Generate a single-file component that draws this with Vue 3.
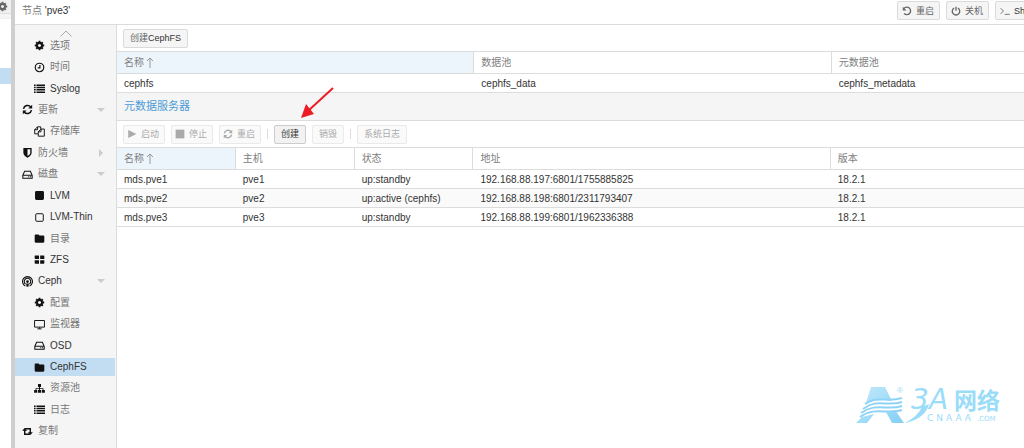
<script setup>
import { h } from 'vue'

const COG = 'M1024 896q0-106-75-181t-181-75-181 75-75 181 75 181 181 75 181-75 75-181zm512-109v222q0 12-8 23t-20 13l-185 28q-19 54-39 91 35 50 107 138 10 12 10 25t-9 23q-27 37-99 108t-94 71q-12 0-26-9l-138-108q-44 23-91 38-16 136-29 186-7 28-36 28h-222q-14 0-24.5-8.5t-11.5-21.5l-28-184q-49-16-90-37l-141 107q-10 9-25 9-14 0-25-11-126-114-165-168-7-10-7-23 0-12 8-23 15-21 51-66.5t54-70.5q-27-50-41-99l-183-27q-13-2-21-12.5t-8-23.5v-222q0-12 8-23t19-13l186-28q14-46 39-92-40-57-107-138-10-12-10-24 0-10 9-23 26-36 98.5-107.5t94.5-71.5q13 0 26 10l138 107q44-23 91-38 16-136 29-186 7-28 36-28h222q14 0 24.5 8.5t11.5 21.5l28 184q49 16 90 37l142-107q9-9 24-9 13 0 25 10 129 119 165 170 7 8 7 22 0 12-8 23-15 21-51 66.5t-54 70.5q26 50 41 98l183 28q13 2 21 12.5t8 23.5z'

// s: stroked outline, f: filled shape, w: stroke width
const icons = {
  cog: { box: '-128 0 1792 1792', f: COG },
  clock: { s: 'M8 1.8a6.2 6.2 0 1 0 0 12.4a6.2 6.2 0 1 0 0-12.4zM8.6 4.5v4h-3.2', w: 1.7 },
  list: { f: 'M0 2h2.4v2.2H0zM3.6 2H16v2.2H3.6zM0 5.4h2.4v2.2H0zM3.6 5.4H16v2.2H3.6zM0 8.8h2.4V11H0zM3.6 8.8H16V11H3.6zM0 12.2h2.4v2.2H0zM3.6 12.2H16v2.2H3.6z' },
  refresh: { s: 'M2.2 7A6 6 0 0 1 12.8 4.4M13.8 9A6 6 0 0 1 3.2 11.6', w: 2.2, f: 'M14.8 1v5.6H9.2zM1.2 15V9.4h5.6z' },
  copy: { s: 'M9.8 4.2V1.2H5.2L1 5.4v6h5M5.2 1.2v4.2H1M10.2 4.4h4.8v10.4H6.2V8.4zM10.2 4.4v4H6.2', w: 1.4 },
  shield: { f: 'M2 1.4h12v7c0 3.2-2.6 5.4-6 7.2c-3.400-1.800-6-4-6-7.200zM8 3.400v9.800c2.400-1.400 4-2.800 4-4.800v-5z' },
  hdd: { s: 'M1.2 9.200L3.800 3.200h8.400l2.600 6v4.200H1.200zM1.200 9.200h13.600', w: 1.5, f: 'M9 10.600h1.500v1.400H9zM11.700 10.600h1.500v1.400h-1.500z' },
  square: { f: 'M3.500 1.500h9a2 2 0 0 1 2 2v9a2 2 0 0 1-2 2h-9a2 2 0 0 1-2-2v-9a2 2 0 0 1 2-2z' },
  squareO: { s: 'M4 2.500h8a1.500 1.500 0 0 1 1.500 1.500v8a1.500 1.500 0 0 1-1.500 1.500H4A1.500 1.500 0 0 1 2.500 12V4A1.500 1.500 0 0 1 4 2.500z', w: 1.4 },
  folder: { f: 'M1 3.500Q1 2 2.500 2h3.700q1.500 0 1.500 1.700h5.800q1.500 0 1.500 1.500v7.300q0 1.500-1.500 1.500h-11Q1 14 1 12.500z' },
  grid: { f: 'M1.500 2h5.300q.5 0 .5.500v4.700H2q-1 0-1-1V2.500zM9 2h5q1 0 1 1v4.200H9zM1 9h6.300v5H2q-1 0-1-1zM9 9h6v4q0 1-1 1H9z' },
  ceph: { s: 'M4.800 14.500A7.200 7.200 0 1 1 11.200 14.500M5.300 11.800A4.700 4.700 0 1 1 10.700 11.800', w: 1.6, f: 'M8 6a2 2 0 1 0 0 4a2 2 0 1 0 0-4zM6 10.800h4l-.700 5H6.700z' },
  monitor: { s: 'M.8 2.200h14.400v9.600H.8zM8 12v2M4.800 14.300h6.400', w: 1.400 },
  sitemap: { f: 'M5.800 1.500h4.400v4.300H8.700v1.700h5V10H15.800v4.300h-4.500V10h1.200V8.700H8.700V10h1.500v4.300H5.800V10h1.500V8.700H3.500V10h1.200v4.300H.2V10h2.100V7.500h5V5.800H5.800z' },
  retweet: { f: 'M3.800 2.800L7.500 7H5v4h5l2 2.200H2.900V7H.2zM12.200 13.200L8.500 9H11V5H6L4 2.800h9.100V9h2.700z' },
  play: { f: 'M2 1.500L15 8L2 14.500z' },
  stop: { f: 'M1 1h14v14H1z' },
  undo: { s: 'M3 4.200A6 6 0 1 1 3.400 12', w: 2.2, f: 'M1.200 1v6h6z' },
  power: { s: 'M5 3.200a6 6 0 1 0 6 0M8 1v6.500', w: 2.1 },
  terminal: { s: 'M1 3.500L5.500 8L1 12.500M7.500 13.300h8', w: 1.400 },
}

const Icon = (props) => {
  const i = icons[props.name]
  return h('svg', { viewBox: i.box || '0 0 16 16', 'aria-hidden': 'true', class: 'icon' }, [
    i.s && h('path', { d: i.s, fill: 'none', stroke: 'currentColor', 'stroke-width': i.w }),
    i.f && h('path', { d: i.f, fill: 'currentColor', 'fill-rule': 'evenodd' }),
  ])
}
Icon.props = ['name']

const nav = [
  { t: '选项', i: 'cog', sub: true },
  { t: '时间', i: 'clock', sub: true },
  { t: 'Syslog', i: 'list', sub: true },
  { t: '更新', i: 'refresh', arrow: 'down' },
  { t: '存储库', i: 'copy', sub: true },
  { t: '防火墙', i: 'shield', arrow: 'right' },
  { t: '磁盘', i: 'hdd', arrow: 'down' },
  { t: 'LVM', i: 'square', sub: true },
  { t: 'LVM-Thin', i: 'squareO', sub: true },
  { t: '目录', i: 'folder', sub: true },
  { t: 'ZFS', i: 'grid', sub: true },
  { t: 'Ceph', i: 'ceph', arrow: 'down' },
  { t: '配置', i: 'cog', sub: true },
  { t: '监视器', i: 'monitor', sub: true },
  { t: 'OSD', i: 'hdd', sub: true },
  { t: 'CephFS', i: 'folder', sub: true, on: true },
  { t: '资源池', i: 'sitemap', sub: true },
  { t: '日志', i: 'list', sub: true },
  { t: '复制', i: 'retweet' },
]
const latin = (t) => /^[\x00-\x7f]+$/.test(t)

const servers = [
  ['mds.pve1', 'pve1', 'up:standby', '192.168.88.197:6801/1755885825', '18.2.1'],
  ['mds.pve2', 'pve2', 'up:active (cephfs)', '192.168.88.198:6801/2311793407', '18.2.1'],
  ['mds.pve3', 'pve3', 'up:standby', '192.168.88.199:6801/1962336388', '18.2.1'],
]
</script>

<template>
  <div class="app">
    <aside class="tree">
      <div class="tree-head"><button class="gear" aria-label="设置"><Icon name="cog" /></button></div>
      <div class="tree-sel"></div>
    </aside>
    <div class="splitter"></div>
    <div class="panel">
      <header class="title">
        <h1><span class="soft">节点</span> 'pve3'</h1>
        <div class="actions">
          <button class="btn"><Icon name="undo" />重启</button>
          <button class="btn"><Icon name="power" />关机</button>
          <button class="btn"><Icon name="terminal" /><span class="dark">Shell</span></button>
        </div>
      </header>
      <div class="body">
        <nav class="side">
          <svg class="up" viewBox="0 0 12 7" aria-hidden="true"><path d="M.5 6.500L6 1l5.500 5.500" fill="none" stroke="#aaa" /></svg>
          <a v-for="n in nav" :key="n.t" href="#" class="item" :class="{ sub: n.sub, on: n.on }">
            <Icon :name="n.i" />
            <span class="label" :class="{ dark: latin(n.t) }">{{ n.t }}</span>
            <i v-if="n.arrow" class="tri" :class="n.arrow"></i>
          </a>
        </nav>
        <main class="main">
          <div class="bar">
            <button class="btn"><span>创建<span class="dark">CephFS</span></span></button>
          </div>
          <table>
            <colgroup><col class="c3" /><col class="c3" /><col /></colgroup>
            <thead>
              <tr><th class="sorted">名称<svg class="sort" viewBox="0 0 8 11" aria-hidden="true"><path d="M4 11V1M1 4l3-3l3 3" /></svg></th><th>数据池</th><th>元数据池</th></tr>
            </thead>
            <tbody>
              <tr><td>cephfs</td><td>cephfs_data</td><td>cephfs_metadata</td></tr>
            </tbody>
          </table>
          <h2>元数据服务器</h2>
          <div class="bar">
            <button class="btn" disabled><Icon name="play" />启动</button>
            <button class="btn" disabled><Icon name="stop" />停止</button>
            <button class="btn" disabled><Icon name="refresh" />重启</button>
            <span class="sep"></span>
            <button class="btn strong">创建</button>
            <button class="btn" disabled>销毁</button>
            <span class="sep"></span>
            <button class="btn" disabled>系统日志</button>
            <svg class="pointer" viewBox="0 0 36 34" aria-hidden="true">
              <path d="M34 2L9 25" stroke="#ed1c24" stroke-width="2" fill="none" /><path d="M2 32L7 18l8 10z" fill="#ed1c24" />
            </svg>
          </div>
          <table>
            <colgroup><col class="c1" /><col class="c1" /><col class="c1" /><col class="c3" /><col /></colgroup>
            <thead>
              <tr><th class="sorted">名称<svg class="sort" viewBox="0 0 8 11" aria-hidden="true"><path d="M4 11V1M1 4l3-3l3 3" /></svg></th><th>主机</th><th>状态</th><th>地址</th><th>版本</th></tr>
            </thead>
            <tbody>
              <tr v-for="s in servers" :key="s[0]"><td v-for="(c, k) in s" :key="k">{{ c }}</td></tr>
            </tbody>
          </table>
        </main>
      </div>
    </div>
    <svg class="mark" viewBox="0 0 146 42">
      <defs>
        <linearGradient id="sky" x1="0" y1="0" x2="1" y2="1"><stop offset="0" stop-color="#c4eafb" /><stop offset="1" stop-color="#83cff5" /></linearGradient>
      </defs>
      <path d="M15 3h14l7 14Q22 14 10 19zM30 28l9-2l9 13H36zM6 33l12-3l-7 9H0z" fill="url(#sky)" />
      <path d="M9 20C22 11 30 19 46 14M7 25C21 14 30 23 46 18M5 29C20 18 31 27 46 22M4 33C19 22 31 31 46 26" fill="none" stroke="#8fd4f6" stroke-width="2" />
      <text x="41" y="9" class="reg">®</text>
      <path d="M73 20Q69 35 49 39Q62 32 66 23z" />
      <text x="55" y="25" class="big">3</text>
      <text x="73" y="25" class="big">A</text>
      <text x="98" y="25" class="cjk">网络</text>
      <text x="71" y="37" class="dom">CNAAA</text>
      <text x="121" y="37" class="com">.COM</text>
    </svg>
  </div>
</template>

<style>
body { margin: 0; }
</style>

<style scoped>
.app {
  position: relative;
  display: flex;
  height: 100vh;
  overflow: hidden;
  background: #fff;
  color: #333;
  font: 10px/14px "Liberation Sans", "Noto Sans CJK SC", sans-serif;
}
.app * { box-sizing: border-box; }
button { font-family: inherit; }
.icon { flex: none; width: 11px; height: 11px; display: block; }
.tree { flex: 0 0 11px; overflow: hidden; }
.tree-head { height: 19px; background: #f5f5f5; border-bottom: 1px solid #eee; }
.gear { display: block; width: 11px; height: 14px; padding: 0; border: 0; border-bottom: 1px solid #ddd; background: #f0f0f0; color: #666; overflow: hidden; }
.gear .icon { margin-left: -3px; }
.tree-sel { height: 16px; margin-top: 49px; background: #c2ddf2; }
.splitter { flex: 0 0 4px; background: #cfcfcf; }
.panel { flex: 1; min-width: 0; display: flex; flex-direction: column; }
.title { display: flex; height: 25px; border-bottom: 1px solid #dcdcdc; padding: 1px 0 0 7px; flex: none; }
h1 { margin: 0; flex: 1; font-size: 10px; line-height: 19px; font-weight: 400; }
.soft { color: #777; }
.dark { color: #333; }
.actions { flex: 0 0 127px; display: flex; gap: 6px; overflow: hidden; }
.btn {
  flex: none;
  display: inline-flex;
  align-items: center;
  gap: 4px;
  height: 19px;
  padding: 0 6px;
  border: 1px solid #dadada;
  border-radius: 2px;
  background: #f5f5f5;
  color: #666;
  font-size: 9px;
  line-height: 12px;
  white-space: nowrap;
}
.btn .icon { width: 10px; height: 10px; }
.actions .btn { padding: 0 5px 0 4px; }
.bar .btn:has(.icon) { padding: 0 5px 0 3px; }
.btn.strong { border-color: #ccc; background: #f2f2f2; color: #333; }
.btn:disabled { border-color: #eaeaea; background: #fafafa; color: #aaa; }
.body { flex: 1; min-height: 0; display: flex; }
.side { flex: 0 0 102px; display: flex; flex-direction: column; background: #f5f5f5; border-right: 1px solid #dcdcdc; padding: 5px 1px 6px 0; }
.up { flex: none; width: 12px; height: 7px; margin: 0 0 -2px 45px; }
.item { flex: 1; display: flex; align-items: center; padding: 0 10px 0 7px; color: #111; text-decoration: none; white-space: nowrap; }
.item.sub { padding-left: 19px; }
.item.on { background: linear-gradient(#c2ddf2, #c2ddf2) center / 100% 18px no-repeat; }
.label { margin-left: 5px; color: #777; }
.label.dark { color: #333; }
.tri { margin-left: auto; width: 0; height: 0; border: 4px solid transparent; }
.tri.down { border-top-color: #ccc; border-bottom-width: 0; }
.tri.right { border-left-color: #ccc; border-right-width: 0; margin-right: 2px; }
.main { flex: 1; min-width: 0; }
.bar { position: relative; display: flex; align-items: center; gap: 6px; height: 26px; padding: 0 6px; }
.sep { width: 1px; height: 10px; background: #ddd; }
.pointer { position: absolute; left: 182px; top: -35px; width: 36px; height: 34px; }
table { width: 100%; table-layout: fixed; border-spacing: 0; }
.c1 { width: 13.1%; }
.c3 { width: 39.4%; }
th { height: 23px; padding: 0 7px; text-align: left; font-weight: 400; color: #808080; border: solid #dcdcdc; border-width: 1px 1px 1px 0; }
th:last-child { border-right: 0; }
th.sorted { background: #edf5fc; }
.sort { width: 8px; height: 11px; margin-left: 2px; vertical-align: -2px; fill: none; stroke: #999; }
td { height: 19px; padding: 2px 7px 0; border-bottom: 1px solid #dcdcdc; }
tbody tr:nth-child(even) td { background: #fafafa; }
h2 { margin: 0; height: 28px; padding: 0 7px; background: #f5f5f5; border-bottom: 1px solid #dcdcdc; color: #4a9bd6; font-size: 11px; line-height: 27px; font-weight: 400; }
.mark { position: absolute; right: 22px; bottom: 22px; width: 146px; height: 42px; fill: #9bdcf8; }
.reg { font-size: 8px; }
.big { font-size: 28px; font-style: italic; font-family: "DejaVu Sans", sans-serif; }
.cjk { font-size: 23px; font-weight: 700; }
.dom { font-size: 9px; font-family: "DejaVu Sans", sans-serif; letter-spacing: 3px; }
.com { font-size: 7px; font-family: "DejaVu Sans", sans-serif; }
</style>
